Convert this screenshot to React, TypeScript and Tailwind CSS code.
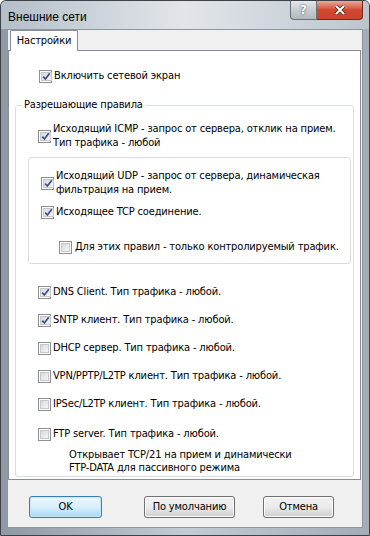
import React from 'react';

const font = { fontFamily: '"DejaVu Sans Condensed", "Liberation Sans", sans-serif' };

// Win7-style checkbox
const Check = ({ checked = false }: { checked?: boolean }) => (
  <span className="inline-flex shrink-0 w-[13px] h-[13px] border border-[#8e8f8f] bg-white p-[1px]">
    <span className="flex-1 flex items-center justify-center border border-[#c6c8cb] bg-gradient-to-br from-[#d6d9dd] to-[#f6f6f6]">
      {checked && (
        <svg width="9" height="9" viewBox="0 0 9 9">
          <path d="M1.2 4.6 L3.4 7 L7.8 1.2" fill="none" stroke="#3b4f86" strokeWidth="1.7" />
        </svg>
      )}
    </span>
  </span>
);

const Row = ({
  checked,
  lines,
  className = '',
}: {
  checked?: boolean;
  lines: string[];
  className?: string;
}) => (
  <div className={`flex items-center gap-[2px] ${className}`}>
    <Check checked={checked} />
    <div className="leading-[14px]">
      {lines.map((l) => (
        <div key={l} className="whitespace-nowrap">{l}</div>
      ))}
    </div>
  </div>
);

const Button = ({ label, primary = false, w }: { label: string; primary?: boolean; w: string }) => (
  <div
    className={`${w} h-[22px] rounded-[3px] border flex items-center justify-center text-[11px] text-black ${
      primary
        ? 'border-[#3c7fb1] bg-gradient-to-b from-[#eaf6fd] via-[#d9f0fc] to-[#a7d9f5] shadow-[inset_0_0_0_1px_#c4e5f6]'
        : 'border-[#707070] bg-gradient-to-b from-[#f2f2f2] via-[#ebebeb] to-[#cfcfcf] shadow-[inset_0_0_0_1px_#fcfcfc]'
    }`}
  >
    {label}
  </div>
);

export default function App() {
  return (
    <div
      className="w-[370px] h-[536px] flex flex-col border border-[#3d4148] rounded-t-[6px] bg-gradient-to-r from-[#8f99a4] via-[#c3cbd3] to-[#a3adb7] overflow-hidden"
      style={font}
    >
      {/* Title bar */}
      <div className="h-[28px] flex items-start relative bg-gradient-to-r from-[#b5bfc9] via-[#e2e6ea] to-[#bcc5ce]">
        <div className="pl-[7px] pt-[7px] text-[12px] text-black" style={{ fontFamily: '"Segoe UI", "Liberation Sans", sans-serif' }}>
          Внешние сети
        </div>
        <div className="ml-auto mr-[6px] flex">
          <div className="w-[27px] h-[19px] border border-[#6b7178] border-t-0 rounded-bl-[4px] bg-gradient-to-b from-[#e4e7ea] via-[#c7ccd1] to-[#b2b8be] flex items-center justify-center text-white text-[13px] font-bold [text-shadow:0_0_2px_#333]">
            ?
          </div>
          <div className="w-[46px] h-[19px] border border-[#6e2a22] border-t-0 border-l-0 rounded-br-[4px] bg-gradient-to-b from-[#e9a99c] via-[#d0482f] to-[#c9452c] flex items-center justify-center">
            <svg width="12" height="10" viewBox="0 0 12 10">
              <path d="M2 1 L10 9 M10 1 L2 9" stroke="#4a1c14" strokeWidth="3.4" />
              <path d="M2 1 L10 9 M10 1 L2 9" stroke="#ffffff" strokeWidth="2" />
            </svg>
          </div>
        </div>
      </div>

      {/* Client area */}
      <div className="mx-[6px] flex-1 bg-[#f0f0f0] border border-[#8b96a1] flex flex-col text-[11px] tracking-[-0.15px] text-black">
        {/* Tab header */}
        <div className="h-[20px] flex items-end pl-[2px]">
          <div className="h-[21px] w-[68px] -mb-[1px] z-10 bg-white border border-[#898c95] border-b-0 rounded-t-[2px] flex items-center justify-center">
            Настройки
          </div>
        </div>

        {/* Tab panel */}
        <div className="h-[430px] mr-[1px] bg-white border border-[#898c95] pl-[6px] pr-[6px] pt-[18px]">
          <Row checked lines={['Включить сетевой экран']} className="pl-[24px]" />

          {/* Group box */}
          <div className="mt-[22px] h-[372px] border border-[#d5dfe5] rounded-[3px] relative pt-[16px] pl-[12px] pr-[2px]">
            <div className="absolute -top-[8px] left-[6px] bg-white px-[2px] leading-[14px]">Разрешающие правила</div>

            <Row checked lines={['Исходящий ICMP - запрос от сервера, отклик на прием.', 'Тип трафика - любой']} className="pl-[10px]" />

            <div className="mt-[7px] h-[107px] border border-[#dcdcdc] rounded-[3px] pt-[11px] pl-[12px]">
              <Row checked lines={['Исходящий UDP - запрос от сервера, динамическая', 'фильтрация на прием.']} />
              <Row checked lines={['Исходящее TCP соединение.']} className="mt-[8px]" />
              <Row lines={['Для этих правил - только контролируемый трафик.']} className="mt-[21px] pl-[18px] gap-[3px]" />
            </div>

            <div className="pl-[10px] pt-[21px] flex flex-col gap-[14px]">
              <Row checked lines={['DNS Client. Тип трафика - любой.']} />
              <Row checked lines={['SNTP клиент. Тип трафика - любой.']} />
              <Row lines={['DHCP сервер. Тип трафика - любой.']} />
              <Row lines={['VPN/PPTP/L2TP клиент. Тип трафика - любой.']} />
              <Row lines={['IPSec/L2TP клиент. Тип трафика - любой.']} />
            </div>
            <Row lines={['FTP server. Тип трафика - любой.']} className="pl-[10px] mt-[16px]" />
            <div className="pl-[41px] pt-[7px] leading-[13px]">
              <div>Открывает TCP/21 на прием и динамически</div>
              <div>FTP-DATA для пассивного режима</div>
            </div>
          </div>
        </div>

        {/* Buttons */}
        <div className="flex items-start pl-[21px] pt-[16px]">
          <Button label="OK" primary w="w-[73px]" />
          <div className="ml-[42px]">
            <Button label="По умолчанию" w="w-[91px]" />
          </div>
          <div className="ml-[28px]">
            <Button label="Отмена" w="w-[71px]" />
          </div>
        </div>
      </div>
      <div className="h-[7px]" />
    </div>
  );
}
